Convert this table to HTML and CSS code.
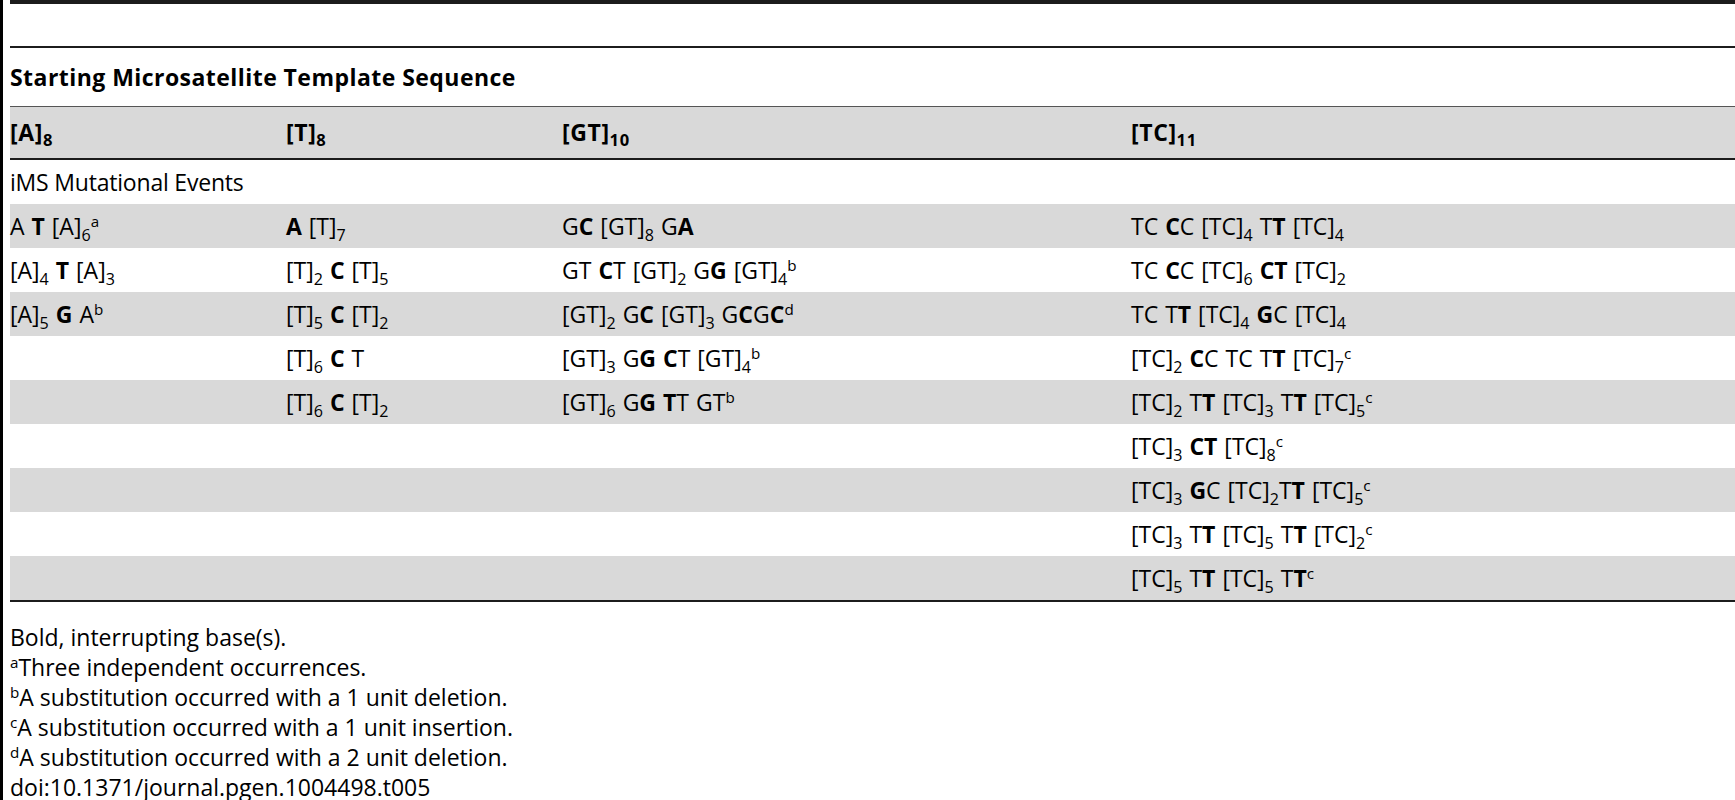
FILE: index.html
```html
<!DOCTYPE html>
<html>
<head>
<meta charset="utf-8">
<title>Table</title>
<link rel="stylesheet" href="styles.css">
</head>
<body>
<div class="page">
  <div class="rule-top"></div>
  <div class="gap"></div>
  <div class="rule-mid"></div>
  <table class="tbl">
    <colgroup>
      <col class="c1"><col class="c2"><col class="c3"><col class="c4">
    </colgroup>
    <thead>
      <tr class="cap"><th colspan="4">Starting Microsatellite Template Sequence</th></tr>
      <tr class="hdr">
        <th>[A]<sub>8</sub></th>
        <th>[T]<sub>8</sub></th>
        <th>[GT]<sub>10</sub></th>
        <th>[TC]<sub>11</sub></th>
      </tr>
    </thead>
    <tbody>
      <tr class="sect"><td colspan="4">iMS Mutational Events</td></tr>
      <tr class="sh">
        <td>A <b>T</b> [A]<sub>6</sub><sup>a</sup></td>
        <td><b>A</b> [T]<sub>7</sub></td>
        <td>G<b>C</b> [GT]<sub>8</sub> G<b>A</b></td>
        <td>TC <b>C</b>C [TC]<sub>4</sub> T<b>T</b> [TC]<sub>4</sub></td>
      </tr>
      <tr>
        <td>[A]<sub>4</sub> <b>T</b> [A]<sub>3</sub></td>
        <td>[T]<sub>2</sub> <b>C</b> [T]<sub>5</sub></td>
        <td>GT <b>C</b>T [GT]<sub>2</sub> G<b>G</b> [GT]<sub>4</sub><sup>b</sup></td>
        <td>TC <b>C</b>C [TC]<sub>6</sub> <b>CT</b> [TC]<sub>2</sub></td>
      </tr>
      <tr class="sh">
        <td>[A]<sub>5</sub> <b>G</b> A<sup>b</sup></td>
        <td>[T]<sub>5</sub> <b>C</b> [T]<sub>2</sub></td>
        <td>[GT]<sub>2</sub> G<b>C</b> [GT]<sub>3</sub> G<b>C</b>G<b>C</b><sup>d</sup></td>
        <td>TC T<b>T</b> [TC]<sub>4</sub> <b>G</b>C [TC]<sub>4</sub></td>
      </tr>
      <tr>
        <td></td>
        <td>[T]<sub>6</sub> <b>C</b> T</td>
        <td>[GT]<sub>3</sub> G<b>G</b> <b>C</b>T [GT]<sub>4</sub><sup>b</sup></td>
        <td>[TC]<sub>2</sub> <b>C</b>C TC T<b>T</b> [TC]<sub>7</sub><sup>c</sup></td>
      </tr>
      <tr class="sh">
        <td></td>
        <td>[T]<sub>6</sub> <b>C</b> [T]<sub>2</sub></td>
        <td>[GT]<sub>6</sub> G<b>G</b> <b>T</b>T GT<sup>b</sup></td>
        <td>[TC]<sub>2</sub> T<b>T</b> [TC]<sub>3</sub> T<b>T</b> [TC]<sub>5</sub><sup>c</sup></td>
      </tr>
      <tr>
        <td></td>
        <td></td>
        <td></td>
        <td>[TC]<sub>3</sub> <b>CT</b> [TC]<sub>8</sub><sup>c</sup></td>
      </tr>
      <tr class="sh">
        <td></td>
        <td></td>
        <td></td>
        <td>[TC]<sub>3</sub> <b>G</b>C [TC]<sub>2</sub>T<b>T</b> [TC]<sub>5</sub><sup>c</sup></td>
      </tr>
      <tr>
        <td></td>
        <td></td>
        <td></td>
        <td>[TC]<sub>3</sub> T<b>T</b> [TC]<sub>5</sub> T<b>T</b> [TC]<sub>2</sub><sup>c</sup></td>
      </tr>
      <tr class="sh last">
        <td></td>
        <td></td>
        <td></td>
        <td>[TC]<sub>5</sub> T<b>T</b> [TC]<sub>5</sub> T<b>T</b><sup>c</sup></td>
      </tr>
    </tbody>
  </table>
  <div class="notes">
    <div>Bold, interrupting base(s).</div>
    <div><sup>a</sup>Three independent occurrences.</div>
    <div><sup>b</sup>A substitution occurred with a 1 unit deletion.</div>
    <div><sup>c</sup>A substitution occurred with a 1 unit insertion.</div>
    <div><sup>d</sup>A substitution occurred with a 2 unit deletion.</div>
    <div>doi:10.1371/journal.pgen.1004498.t005</div>
  </div>
</div>
</body>
</html>
```

FILE: styles.css
```css
html, body {
  margin: 0;
  padding: 0;
  background: #fff;
}
body {
  font-family: "Open Sans", "Noto Sans", sans-serif;
  color: #000;
  overflow: hidden;
}
.page {
  border-left: 3px solid #000;
  padding-left: 7px;
  min-height: 800px;
  box-sizing: border-box;
}
.rule-top {
  height: 4px;
  background: #1c1c1c;
}
.gap {
  height: 42px;
}
.rule-mid {
  height: 2px;
  background: #1c1c1c;
}
.tbl {
  width: 100%;
  border-collapse: separate;
  border-spacing: 0;
  font-size: 23px;
}
.c1 { width: 276px; }
.c2 { width: 276px; }
.c3 { width: 569px; }
.tbl th, .tbl td {
  padding: 0;
  text-align: left;
  white-space: nowrap;
  vertical-align: middle;
}
.tbl tbody td {
  word-spacing: 1px;
}
.cap th {
  font-weight: 700;
  line-height: 58px;
  letter-spacing: 0.45px;
}
.hdr th {
  font-weight: 700;
  background: #d9d9d9;
  line-height: 51px;
  letter-spacing: 0.6px;
  border-top: 1px solid #555;
  border-bottom: 2px solid #1c1c1c;
}
.hdr th sub {
  font-size: 0.72em;
  vertical-align: -0.32em;
}
.tbl tbody td {
  line-height: 44px;
}
.tbl .sect td {
  word-spacing: 0;
  letter-spacing: -0.2px;
}
.sh td {
  background: #d9d9d9;
}
.last td {
  border-bottom: 2px solid #1c1c1c;
}
.tbl b {
  font-weight: 700;
}
sub {
  font-size: 0.7em;
  vertical-align: -0.35em;
  line-height: 0;
}
sup {
  font-size: 0.66em;
  vertical-align: 0.55em;
  line-height: 0;
}
.notes {
  padding: 20px 0 0 0;
  font-size: 23px;
  line-height: 30px;
}
```
